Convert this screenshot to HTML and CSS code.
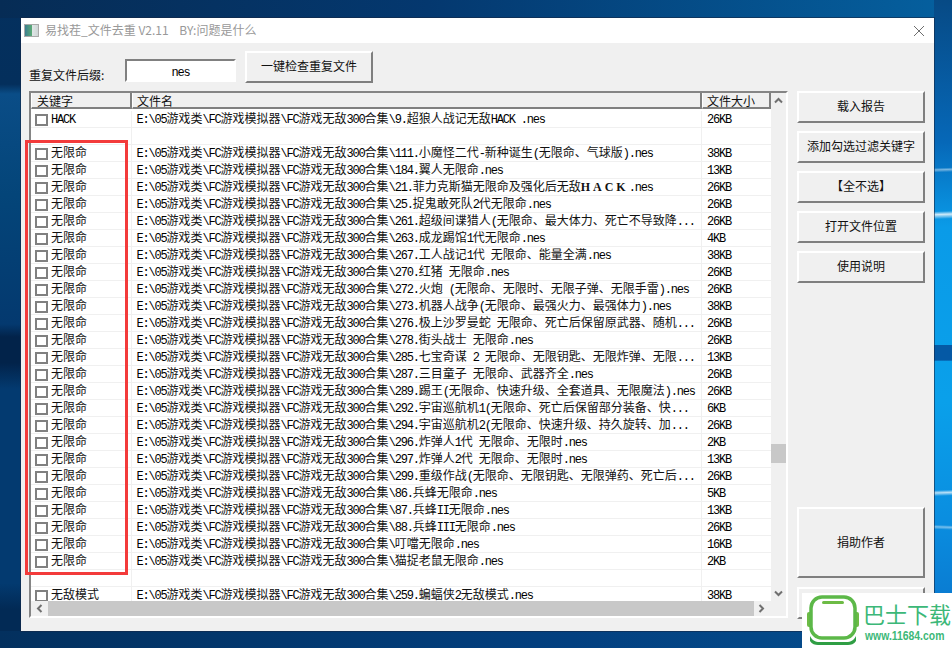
FILE: index.html
```html
<!DOCTYPE html>
<html lang="zh">
<head>
<meta charset="utf-8">
<title>易找茬_文件去重</title>
<link rel="stylesheet" href="styles.css">
</head>
<body>

<div class="window">
	<div class="titlebar">
		<span class="appicon"></span>
		<span class="title">易找茬_文件去重 V2.11    BY:问题是什么</span>
		<svg class="close" width="12" height="12" viewBox="0 0 12 12"><path d="M1 1 L11 11 M11 1 L1 11" stroke="#6e6e6e" stroke-width="1" fill="none"/></svg>
	</div>

	<div class="content">
		<div class="toolbar">
			<span class="suffix-label">重复文件后缀:</span>
			<div class="suffix-input"><span class="a">nes</span></div>
			<button class="btn btn-check">一键检查重复文件</button>
		</div>

		<div class="main">
			<div class="list">
				<div class="list-body">
					<div class="head">
						<div class="hcell">关键字</div>
						<div class="hcell">文件名</div>
						<div class="hcell">文件大小</div>
					</div>
					<div class="rows">
						<div class="row"><div class="kw"><span class="box"></span><span class="a">HACK</span></div><div class="fn"><span class="a">E:\05</span>游戏类<span class="a">\FC</span>游戏模拟器<span class="a">\FC</span>游戏无敌<span class="a">300</span>合集<span class="a">\9.</span>超狼人战记无敌<span class="a">HACK .nes</span></div><div class="sz"><span class="a">26KB</span></div></div>
						<div class="row"><div class="kw"></div><div class="fn"></div><div class="sz"></div></div>
						<div class="row"><div class="kw"><span class="box"></span>无限命</div><div class="fn"><span class="a">E:\05</span>游戏类<span class="a">\FC</span>游戏模拟器<span class="a">\FC</span>游戏无敌<span class="a">300</span>合集<span class="a">\111.</span>小魔怪二代<span class="a">-</span>新种诞生<span class="a">(</span>无限命、气球版<span class="a">).nes</span></div><div class="sz"><span class="a">38KB</span></div></div>
						<div class="row"><div class="kw"><span class="box"></span>无限命</div><div class="fn"><span class="a">E:\05</span>游戏类<span class="a">\FC</span>游戏模拟器<span class="a">\FC</span>游戏无敌<span class="a">300</span>合集<span class="a">\184.</span>翼人无限命<span class="a">.nes</span></div><div class="sz"><span class="a">13KB</span></div></div>
						<div class="row"><div class="kw"><span class="box"></span>无限命</div><div class="fn"><span class="a">E:\05</span>游戏类<span class="a">\FC</span>游戏模拟器<span class="a">\FC</span>游戏无敌<span class="a">300</span>合集<span class="a">\21.</span>菲力克斯猫无限命及强化后无敌<span class="wide">HACK</span><span class="a">.nes</span></div><div class="sz"><span class="a">26KB</span></div></div>
						<div class="row"><div class="kw"><span class="box"></span>无限命</div><div class="fn"><span class="a">E:\05</span>游戏类<span class="a">\FC</span>游戏模拟器<span class="a">\FC</span>游戏无敌<span class="a">300</span>合集<span class="a">\25.</span>捉鬼敢死队<span class="a">2</span>代无限命<span class="a">.nes</span></div><div class="sz"><span class="a">26KB</span></div></div>
						<div class="row"><div class="kw"><span class="box"></span>无限命</div><div class="fn"><span class="a">E:\05</span>游戏类<span class="a">\FC</span>游戏模拟器<span class="a">\FC</span>游戏无敌<span class="a">300</span>合集<span class="a">\261.</span>超级间谍猎人<span class="a">(</span>无限命、最大体力、死亡不导致降<span class="a">...</span></div><div class="sz"><span class="a">26KB</span></div></div>
						<div class="row"><div class="kw"><span class="box"></span>无限命</div><div class="fn"><span class="a">E:\05</span>游戏类<span class="a">\FC</span>游戏模拟器<span class="a">\FC</span>游戏无敌<span class="a">300</span>合集<span class="a">\263.</span>成龙踢馆<span class="a">1</span>代无限命<span class="a">.nes</span></div><div class="sz"><span class="a">4KB</span></div></div>
						<div class="row"><div class="kw"><span class="box"></span>无限命</div><div class="fn"><span class="a">E:\05</span>游戏类<span class="a">\FC</span>游戏模拟器<span class="a">\FC</span>游戏无敌<span class="a">300</span>合集<span class="a">\267.</span>工人战记<span class="a">1</span>代<span class="a"> </span>无限命、能量全满<span class="a">.nes</span></div><div class="sz"><span class="a">38KB</span></div></div>
						<div class="row"><div class="kw"><span class="box"></span>无限命</div><div class="fn"><span class="a">E:\05</span>游戏类<span class="a">\FC</span>游戏模拟器<span class="a">\FC</span>游戏无敌<span class="a">300</span>合集<span class="a">\270.</span>红猪<span class="a"> </span>无限命<span class="a">.nes</span></div><div class="sz"><span class="a">26KB</span></div></div>
						<div class="row"><div class="kw"><span class="box"></span>无限命</div><div class="fn"><span class="a">E:\05</span>游戏类<span class="a">\FC</span>游戏模拟器<span class="a">\FC</span>游戏无敌<span class="a">300</span>合集<span class="a">\272.</span>火炮<span class="a"> (</span>无限命、无限时、无限子弹、无限手雷<span class="a">).nes</span></div><div class="sz"><span class="a">26KB</span></div></div>
						<div class="row"><div class="kw"><span class="box"></span>无限命</div><div class="fn"><span class="a">E:\05</span>游戏类<span class="a">\FC</span>游戏模拟器<span class="a">\FC</span>游戏无敌<span class="a">300</span>合集<span class="a">\273.</span>机器人战争<span class="a">(</span>无限命、最强火力、最强体力<span class="a">).nes</span></div><div class="sz"><span class="a">38KB</span></div></div>
						<div class="row"><div class="kw"><span class="box"></span>无限命</div><div class="fn"><span class="a">E:\05</span>游戏类<span class="a">\FC</span>游戏模拟器<span class="a">\FC</span>游戏无敌<span class="a">300</span>合集<span class="a">\276.</span>极上沙罗曼蛇<span class="a"> </span>无限命、死亡后保留原武器、随机<span class="a">...</span></div><div class="sz"><span class="a">26KB</span></div></div>
						<div class="row"><div class="kw"><span class="box"></span>无限命</div><div class="fn"><span class="a">E:\05</span>游戏类<span class="a">\FC</span>游戏模拟器<span class="a">\FC</span>游戏无敌<span class="a">300</span>合集<span class="a">\278.</span>街头战士<span class="a"> </span>无限命<span class="a">.nes</span></div><div class="sz"><span class="a">26KB</span></div></div>
						<div class="row"><div class="kw"><span class="box"></span>无限命</div><div class="fn"><span class="a">E:\05</span>游戏类<span class="a">\FC</span>游戏模拟器<span class="a">\FC</span>游戏无敌<span class="a">300</span>合集<span class="a">\285.</span>七宝奇谋<span class="a"> 2 </span>无限命、无限钥匙、无限炸弹、无限<span class="a">...</span></div><div class="sz"><span class="a">13KB</span></div></div>
						<div class="row"><div class="kw"><span class="box"></span>无限命</div><div class="fn"><span class="a">E:\05</span>游戏类<span class="a">\FC</span>游戏模拟器<span class="a">\FC</span>游戏无敌<span class="a">300</span>合集<span class="a">\287.</span>三目童子<span class="a"> </span>无限命、武器齐全<span class="a">.nes</span></div><div class="sz"><span class="a">26KB</span></div></div>
						<div class="row"><div class="kw"><span class="box"></span>无限命</div><div class="fn"><span class="a">E:\05</span>游戏类<span class="a">\FC</span>游戏模拟器<span class="a">\FC</span>游戏无敌<span class="a">300</span>合集<span class="a">\289.</span>踢王<span class="a">(</span>无限命、快速升级、全套道具、无限魔法<span class="a">).nes</span></div><div class="sz"><span class="a">26KB</span></div></div>
						<div class="row"><div class="kw"><span class="box"></span>无限命</div><div class="fn"><span class="a">E:\05</span>游戏类<span class="a">\FC</span>游戏模拟器<span class="a">\FC</span>游戏无敌<span class="a">300</span>合集<span class="a">\292.</span>宇宙巡航机<span class="a">1(</span>无限命、死亡后保留部分装备、快<span class="a">...</span></div><div class="sz"><span class="a">6KB</span></div></div>
						<div class="row"><div class="kw"><span class="box"></span>无限命</div><div class="fn"><span class="a">E:\05</span>游戏类<span class="a">\FC</span>游戏模拟器<span class="a">\FC</span>游戏无敌<span class="a">300</span>合集<span class="a">\294.</span>宇宙巡航机<span class="a">2(</span>无限命、快速升级、持久旋转、加<span class="a">...</span></div><div class="sz"><span class="a">26KB</span></div></div>
						<div class="row"><div class="kw"><span class="box"></span>无限命</div><div class="fn"><span class="a">E:\05</span>游戏类<span class="a">\FC</span>游戏模拟器<span class="a">\FC</span>游戏无敌<span class="a">300</span>合集<span class="a">\296.</span>炸弹人<span class="a">1</span>代<span class="a"> </span>无限命、无限时<span class="a">.nes</span></div><div class="sz"><span class="a">2KB</span></div></div>
						<div class="row"><div class="kw"><span class="box"></span>无限命</div><div class="fn"><span class="a">E:\05</span>游戏类<span class="a">\FC</span>游戏模拟器<span class="a">\FC</span>游戏无敌<span class="a">300</span>合集<span class="a">\297.</span>炸弹人<span class="a">2</span>代<span class="a"> </span>无限命、无限时<span class="a">.nes</span></div><div class="sz"><span class="a">13KB</span></div></div>
						<div class="row"><div class="kw"><span class="box"></span>无限命</div><div class="fn"><span class="a">E:\05</span>游戏类<span class="a">\FC</span>游戏模拟器<span class="a">\FC</span>游戏无敌<span class="a">300</span>合集<span class="a">\299.</span>重级作战<span class="a">(</span>无限命、无限钥匙、无限弹药、死亡后<span class="a">...</span></div><div class="sz"><span class="a">26KB</span></div></div>
						<div class="row"><div class="kw"><span class="box"></span>无限命</div><div class="fn"><span class="a">E:\05</span>游戏类<span class="a">\FC</span>游戏模拟器<span class="a">\FC</span>游戏无敌<span class="a">300</span>合集<span class="a">\86.</span>兵蜂无限命<span class="a">.nes</span></div><div class="sz"><span class="a">5KB</span></div></div>
						<div class="row"><div class="kw"><span class="box"></span>无限命</div><div class="fn"><span class="a">E:\05</span>游戏类<span class="a">\FC</span>游戏模拟器<span class="a">\FC</span>游戏无敌<span class="a">300</span>合集<span class="a">\87.</span>兵蜂<span class="a">II</span>无限命<span class="a">.nes</span></div><div class="sz"><span class="a">13KB</span></div></div>
						<div class="row"><div class="kw"><span class="box"></span>无限命</div><div class="fn"><span class="a">E:\05</span>游戏类<span class="a">\FC</span>游戏模拟器<span class="a">\FC</span>游戏无敌<span class="a">300</span>合集<span class="a">\88.</span>兵蜂<span class="a">III</span>无限命<span class="a">.nes</span></div><div class="sz"><span class="a">26KB</span></div></div>
						<div class="row"><div class="kw"><span class="box"></span>无限命</div><div class="fn"><span class="a">E:\05</span>游戏类<span class="a">\FC</span>游戏模拟器<span class="a">\FC</span>游戏无敌<span class="a">300</span>合集<span class="a">\</span>叮噹无限命<span class="a">.nes</span></div><div class="sz"><span class="a">16KB</span></div></div>
						<div class="row"><div class="kw"><span class="box"></span>无限命</div><div class="fn"><span class="a">E:\05</span>游戏类<span class="a">\FC</span>游戏模拟器<span class="a">\FC</span>游戏无敌<span class="a">300</span>合集<span class="a">\</span>猫捉老鼠无限命<span class="a">.nes</span></div><div class="sz"><span class="a">2KB</span></div></div>
						<div class="row"><div class="kw"></div><div class="fn"></div><div class="sz"></div></div>
						<div class="row"><div class="kw"><span class="box"></span>无敌模式</div><div class="fn"><span class="a">E:\05</span>游戏类<span class="a">\FC</span>游戏模拟器<span class="a">\FC</span>游戏无敌<span class="a">300</span>合集<span class="a">\259.</span>蝙蝠侠<span class="a">2</span>无敌模式<span class="a">.nes</span></div><div class="sz"><span class="a">38KB</span></div></div>
					</div>
				</div>

				<div class="vscroll">
					<svg width="15" height="15" viewBox="0 0 15 15"><path d="M4 9.5 L7.5 6 L11 9.5" stroke="#707070" stroke-width="2" fill="none"/></svg>
					<div class="vtrack"><div class="vthumb"></div></div>
					<svg width="15" height="15" viewBox="0 0 15 15"><path d="M4 5.5 L7.5 9 L11 5.5" stroke="#707070" stroke-width="2" fill="none"/></svg>
				</div>

				<div class="hscroll">
					<svg width="15" height="15" viewBox="0 0 15 15"><path d="M9.5 4 L6 7.5 L9.5 11" stroke="#707070" stroke-width="2" fill="none"/></svg>
					<div class="hthumb"></div>
					<svg width="15" height="15" viewBox="0 0 15 15"><path d="M5.5 4 L9 7.5 L5.5 11" stroke="#707070" stroke-width="2" fill="none"/></svg>
				</div>
			</div>

			<div class="side">
				<button class="btn">载入报告</button>
				<button class="btn">添加勾选过滤关键字</button>
				<button class="btn">【全不选】</button>
				<button class="btn">打开文件位置</button>
				<button class="btn">使用说明</button>
				<button class="btn btn-donate">捐助作者</button>
				<button class="btn"></button>
			</div>
		</div>
	</div>

	<div class="redbox"></div>
</div>

<div class="watermark">
	<svg class="wm-logo" width="52" height="51" viewBox="0 0 52 51">
		<rect x="0" y="17" width="5" height="15" rx="2" fill="#6dbb45"/>
		<rect x="47" y="17" width="5" height="15" rx="2" fill="#6dbb45"/>
		<rect x="4" y="2" width="44" height="41" rx="11" fill="#fff" stroke="#5cb848" stroke-width="3.5"/>
		<rect x="15" y="6" width="22" height="3" rx="1.5" fill="#6dbb45"/>
		<path d="M3 41 C6 47 10 47 14 47 L38 47 C42 47 46 47 49 41 L49 46 C47 49 44 50 41 50 L11 50 C8 50 5 49 3 46 Z" fill="#2f9e44"/>
	</svg>
	<div class="wm-text">
		<div class="wm-name">巴士下载</div>
		<div class="wm-url">www.11684.com</div>
	</div>
</div>

</body>
</html>
```

FILE: styles.css
```css
* {
	box-sizing:border-box;
}
html, body {
	margin:0;
	height:648px;
	overflow:hidden;
}
body {
	position:relative;
	font:12px/16px "Noto Sans CJK SC", sans-serif;
	color:#111;
	padding:18px 0 0 21px;
	background-color:#04305e;
	background-image:
		linear-gradient(178deg, transparent 25.9%, rgba(255,255,255,0.45) 26.2%, transparent 26.6%),
		linear-gradient(178deg, transparent 32.6%, rgba(255,255,255,0.8) 33.1%, transparent 33.8%),
		linear-gradient(to bottom, transparent 53.2%, #0559a5 53.3%, #0559a5 55.6%, transparent 55.7%),
		linear-gradient(178deg, transparent 75.6%, rgba(255,255,255,0.7) 76%, transparent 76.5%),
		linear-gradient(182deg, transparent 81%, rgba(255,255,255,0.45) 81.3%, transparent 81.7%),
		linear-gradient(to bottom, #074a85 0, #0668b8 22%, #0a9be8 35%, #0aa0ea 62%, #0a8ee0 80%, #0a70c8 100%),
		linear-gradient(to right, #062c55 0, #04386f 45%, #05609f 100%),
		linear-gradient(to right, #03305e 0, #034080 60%, #05508f 100%),
		linear-gradient(to bottom, #04305e 0, #042f5c 13%, #0a4d87 14.5%, #044579 30%, #04396f 50%, #02234a 52%, #02234a 56%, #033a70 60%, #033a70 90%, #022a55 94%, #022a55 100%);
	background-size:18px 100%, 18px 100%, 18px 100%, 18px 100%, 18px 100%, 18px 100%, 100% 18px, 100% 17px, 21px 100%;
	background-position:right top, right top, right top, right top, right top, right top, left top, left bottom, left top;
	background-repeat:no-repeat;
}

/* window */
.window {
	position:relative;
	width:913px;
	height:613px;
	background-color:#f0f0f0;
	box-shadow:0 0 0 1px rgba(20,40,70,0.6);
}
.titlebar {
	display:flex;
	align-items:center;
	height:25px;
	padding:0 9px 0 3px;
	background-color:#fff;
}
.appicon {
	width:15px;
	height:13px;
	margin-right:6px;
	border:1px solid #aaa;
	background:linear-gradient(to right, #3c7f8f 0, #5aa878 50%, #dfe6e6 55%, #cfd6d6 100%);
}
.title {
	flex:1;
	padding-bottom:2px;
	color:#999;
	white-space:pre;
}
.close {
	display:block;
}
.content {
	padding:8px 0 0 8px;
}

/* top row */
.toolbar {
	display:flex;
	height:32px;
}
.suffix-label {
	width:96px;
	padding-top:16px;
	white-space:nowrap;
}
.suffix-input {
	width:111px;
	height:23px;
	margin:8px 9px 0 0;
	border:2px solid;
	border-color:#808080 #fff #fff #808080;
	background-color:#fff;
	text-align:center;
	line-height:19px;
}
.btn {
	display:block;
	width:128px;
	height:32px;
	padding:0 0 2px;
	border:2px solid;
	border-color:#fff #7f7f7f #7f7f7f #fff;
	background-color:#f0f0f0;
	color:#111;
	font:inherit;
	outline:none;
}

/* list + buttons */
.main {
	display:flex;
	margin-top:8px;
	height:528px;
}
.list {
	display:grid;
	grid-template-columns:740px 15px;
	grid-template-rows:508px 15px;
	width:759px;
	height:527px;
	border:2px solid;
	border-color:#858585 #fff #fff #858585;
	background-color:#f0f0f0;
}
.list-body {
	overflow:hidden;
	background-color:#fff;
}
.head {
	display:grid;
	grid-template-columns:101px 570px 69px;
	height:16px;
	background-color:#fff;
}
.hcell {
	height:16px;
	padding-left:5px;
	overflow:hidden;
	background-color:#f0f0f0;
	border-right:2px solid #808080;
	border-bottom:2px solid #808080;
	border-left:1px solid #fff;
}
.hcell + .hcell {
	padding-left:4px;
}
.rows {
	padding-top:2px;
}
.row {
	display:grid;
	grid-template-columns:101px 570px 69px;
	height:17px;
	line-height:14px;
	border-bottom:1px solid #f0f0f0;
	white-space:pre;
}
.kw {
	display:flex;
	align-items:flex-start;
	padding-left:4px;
	border-right:1px solid #f0f0f0;
}
.fn {
	padding-left:4.5px;
	border-right:1px solid #f0f0f0;
}
.sz {
	padding-left:5px;
}
.box {
	width:13px;
	height:12px;
	margin:3px 3px 0 0;
	border:2px solid #808080;
	background-color:#fff;
}
.a {
	font:12px/12px "Liberation Mono", monospace;
	letter-spacing:-1.2px;
	color:#000;
}
.kw .a {
	line-height:18px;
}
.wide {
	font:bold 12px/12px "Liberation Serif", serif;
	letter-spacing:3px;
}

/* scrollbars */
.vscroll {
	display:flex;
	flex-direction:column;
	grid-column:2;
	grid-row:1;
}
.vscroll svg, .hscroll svg {
	display:block;
	flex:none;
}
.vtrack {
	flex:1;
	position:relative;
}
.vthumb {
	position:absolute;
	top:336px;
	left:0;
	width:15px;
	height:19px;
	background-color:#c8c8c8;
}
.hscroll {
	display:flex;
	grid-column:1;
	grid-row:2;
	padding-left:1px;
}
.hthumb {
	width:706px;
	margin:0 0 0 1px;
	background-color:#c8c8c8;
}

.side {
	display:flex;
	flex-direction:column;
	gap:8px;
	margin-left:9px;
}
.btn-donate {
	height:71px;
	margin-top:auto;
	margin-bottom:1px;
}

/* overlays */
.redbox {
	position:absolute;
	left:4px;
	top:122px;
	width:103px;
	height:435px;
	border:3px solid #f33b3b;
}
.watermark {
	position:absolute;
	right:0;
	bottom:0;
	display:flex;
	width:150px;
	height:55px;
	padding:2px 0 0 5px;
	background-color:#fff;
}
.wm-logo {
	flex:none;
}
.wm-text {
	flex:none;
	width:89px;
	margin-left:4px;
	color:#3cb878;
	white-space:nowrap;
}
.wm-name {
	font-size:22px;
	line-height:26px;
	padding-top:5px;
}
.wm-url {
	font:bold 13px/14px "Liberation Sans", sans-serif;
	margin:3px 0 0 2px;
	transform:scaleX(0.8);
	transform-origin:left center;
}
```
